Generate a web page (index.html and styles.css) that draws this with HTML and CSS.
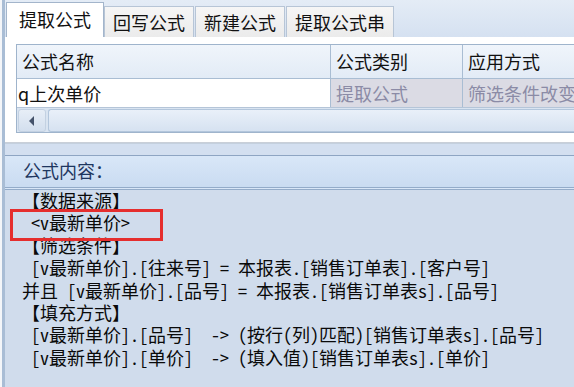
FILE: index.html
```html
<!DOCTYPE html>
<html lang="zh-CN">
<head>
    <meta charset="UTF-8">
    <title>公式设置</title>
    <link rel="stylesheet" href="styles.css">
</head>
<body>
    <div class="window">
        <div class="tab-strip">
            <div class="tab active">提取公式</div>
            <div class="tab">回写公式</div>
            <div class="tab">新建公式</div>
            <div class="tab">提取公式串</div>
        </div>
        <div class="tab-panel">
            <div class="grid">
                <div class="grid-row grid-head">
                    <div class="cell c1">公式名称</div>
                    <div class="cell c2">公式类别</div>
                    <div class="cell c3">应用方式</div>
                </div>
                <div class="grid-row grid-data">
                    <div class="cell c1">q上次单价</div>
                    <div class="cell c2 readonly">提取公式</div>
                    <div class="cell c3 readonly">筛选条件改变</div>
                </div>
                <div class="hscroll">
                    <div class="scroll-btn">
                        <svg width="8" height="10" viewBox="0 0 8 10"><path d="M6 0 L1 5 L6 10 Z" fill="#44526a"/></svg>
                    </div>
                    <div class="scroll-thumb"></div>
                </div>
            </div>
        </div>
        <div class="splitter"></div>
        <div class="group">
            <div class="group-head">公式内容：</div>
            <div class="group-body">
<pre class="formula">【数据来源】
 &lt;v最新单价&gt;
【筛选条件】
 [v最新单价].[往来号] = 本报表.[销售订单表].[客户号]
并且 [v最新单价].[品号] = 本报表.[销售订单表s].[品号]
【填充方式】
 [v最新单价].[品号]  -&gt; （按行(列)匹配）[销售订单表s].[品号]
 [v最新单价].[单价]  -&gt; （填入值）[销售订单表s].[单价]</pre>
                <div class="mark"></div>
            </div>
        </div>
    </div>
</body>
</html>
```

FILE: styles.css
```css
body {
    margin: 0;
    background-color: #f4f6f9;
    font-family: "Noto Sans CJK SC", "Noto Sans", sans-serif;
    font-size: 18px;
    color: #111;
}
.window {
    margin-left: 2px;
    border-left: 3px solid #a9bdd5;
    height: 387px;
    width: 569px;
    display: flex;
    flex-direction: column;
    background-color: #d3dff0;
    overflow: hidden;
}
.tab-strip {
    display: flex;
    align-items: flex-end;
    height: 37px;
    padding-left: 1px;
    background: linear-gradient(#e4ecf6, #d5e1f1);
}
.tab {
    height: 30px;
    line-height: 30px;
    padding: 0 8px;
    margin-right: 1px;
    background: linear-gradient(#f6f6f6, #ebebeb);
    border: 1px solid #b7c5d6;
    border-bottom: none;
    white-space: nowrap;
}
.tab.active {
    height: 34px;
    line-height: 32px;
    padding: 0 12px;
    background: #fff;
    border-color: #a3b5cb;
    margin-right: 0;
}
.tab-panel {
    height: 98px;
    padding: 7px 0 0 11px;
    background-color: #fff;
    border-bottom: 1px solid #c9cfd8;
}
.grid {
    border: 1px solid #9fb4cc;
    border-right: none;
    height: 87px;
    overflow: hidden;
}
.grid-row {
    display: grid;
    grid-template-columns: 313px 132px 200px;
}
.cell {
    padding-left: 5px;
    white-space: nowrap;
    overflow: hidden;
}
.grid-head {
    height: 33px;
    line-height: 33px;
    background: linear-gradient(#f0f5fb, #e2ebf6);
    border-bottom: 1px solid #a9bdd3;
}
.grid-head .c2,
.grid-head .c3,
.grid-data .c2,
.grid-data .c3 {
    border-left: 1px solid #a9bdd3;
}
.grid-data {
    height: 28px;
    line-height: 28px;
    border-bottom: 1px solid #b5c5d8;
}
.grid-data .c1 {
    padding-left: 1px;
    background-color: #fff;
}
.readonly {
    background-color: #dbdbe4;
    color: #8b8ba6;
}
.hscroll {
    display: flex;
    gap: 2px;
    height: 24px;
    padding: 1px 0 0 1px;
    background-color: #d9e4f1;
}
.scroll-btn {
    width: 26px;
    height: 21px;
    display: flex;
    align-items: center;
    justify-content: center;
    border: 1px solid #c3d1e2;
    border-radius: 3px;
    background: linear-gradient(#e7eef7, #d3dfee);
}
.scroll-thumb {
    flex: 1;
    height: 21px;
    border: 1px solid #b3c6dc;
    border-right: none;
    border-radius: 3px 0 0 3px;
    background: linear-gradient(#e9f0f9, #d6e2f1);
}
.splitter {
    height: 11px;
    border-top: 1px solid #c4d0de;
}
.group {
    flex: 1;
    display: flex;
    flex-direction: column;
    border-top: 1px solid #8ea5c3;
}
.group-head {
    height: 31px;
    line-height: 29px;
    padding-left: 18px;
    color: #1e3660;
    background: linear-gradient(#d9e7f8, #c9dbf1);
    border-bottom: 3px double #93abc9;
}
.group-body {
    position: relative;
    flex: 1;
    background-color: #d0dcec;
}
.formula {
    margin: -1px 0 0;
    padding: 0 0 0 17px;
    font-family: "Noto Sans CJK SC", sans-serif;
    font-size: 18px;
    line-height: 22.4px;
    font-feature-settings: "hwid" 1;
    color: #0a0a0a;
}
.mark {
    position: absolute;
    left: 5px;
    top: 19px;
    width: 147px;
    height: 26px;
    border: 3px solid #e52e2e;
}
```
